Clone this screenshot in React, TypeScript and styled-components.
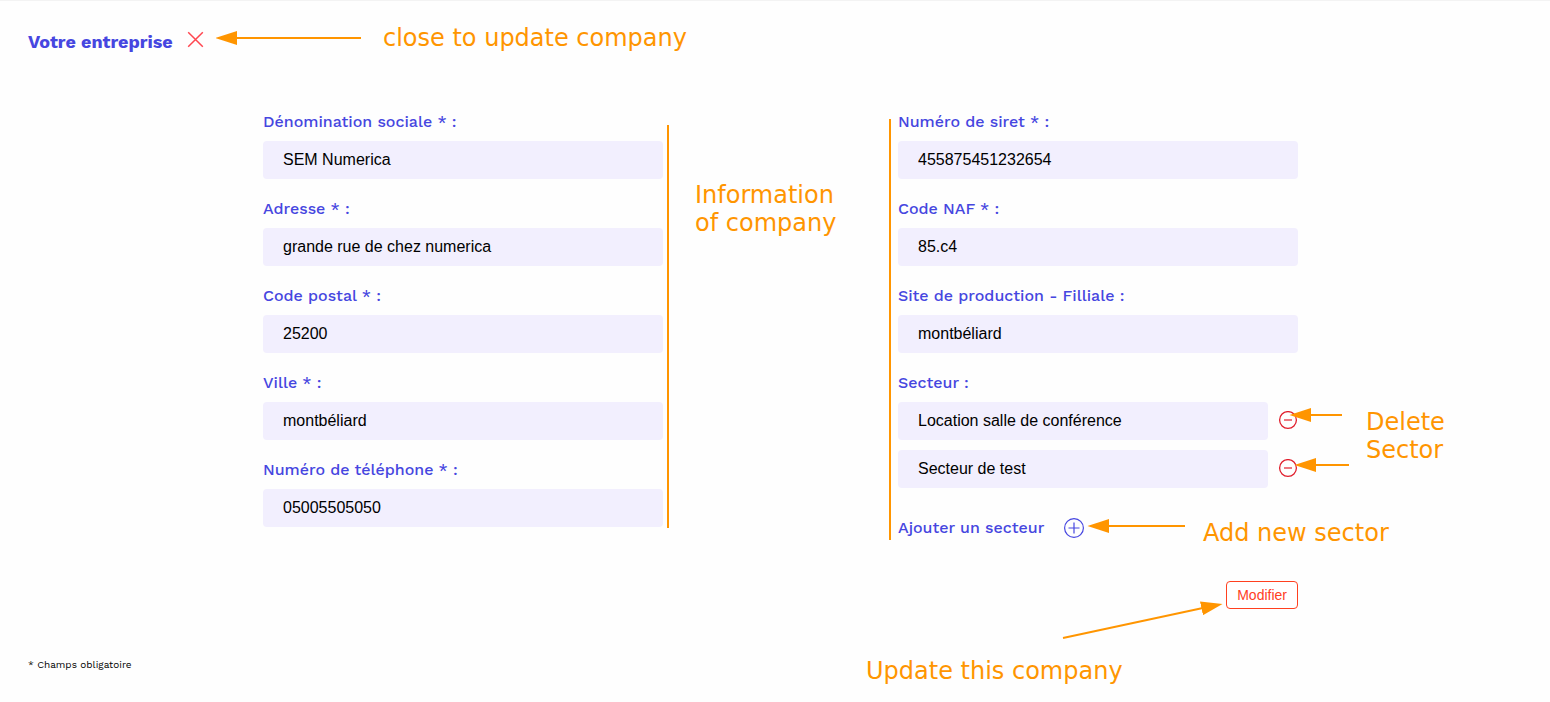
import React, { useState } from "react";
import styled, { createGlobalStyle } from "styled-components";

const color = {
  brand: "#4646e0",
  field: "#f2effe",
  note: "#ff9500",
  danger: "#e01e2c",
  action: "#ff401f",
};

const GlobalStyle = createGlobalStyle`
  *, *::before, *::after { box-sizing: border-box; }
  body {
    margin: 0;
    background: #fefefe;
    color: #000;
    font-family: "Work Sans", Inter, sans-serif;
    font-size: 16px;
  }
`;

const Page = styled.main`
  border-top: 1px solid #f3f3f3;
  padding: 21px 17px 20px 28px;
`;

const Header = styled.header`
  display: flex;
  align-items: center;
  height: 32px;
  margin-bottom: 58px;
`;

const Title = styled.h1`
  margin: 0;
  padding-top: 8px;
  min-width: 145px;
  color: ${color.brand};
  font-size: 18px;
  line-height: 22px;
  font-weight: 700;
`;

const IconButton = styled.button<{ $size: number }>`
  display: block;
  flex: none;
  width: ${(p) => p.$size}px;
  height: ${(p) => p.$size}px;
  padding: 0;
  border: 0;
  background: none;
  cursor: pointer;
`;

const CloseButton = styled(IconButton)`
  margin: 2px 12px 0 14px;
`;

const HeaderArrow = styled.svg`
  flex: none;
  display: block;
  margin-right: 22px;
`;

const Note = styled.p`
  margin: 0;
  color: ${color.note};
  font-family: "DejaVu Sans", sans-serif;
  font-size: 24px;
  line-height: 28px;
  white-space: nowrap;
`;

const Form = styled.form`
  position: relative;
  display: flex;
  flex-wrap: wrap;
  justify-content: space-between;
  max-width: 1035px;
  margin: 0 auto;
`;

const Column = styled.div`
  display: flex;
  flex-direction: column;
  flex: 0 1 400px;
  gap: 20px;
`;

const FieldGroup = styled.div`
  display: flex;
  flex-direction: column;
  gap: 10px;
`;

const Label = styled.label`
  color: ${color.brand};
  font-size: 16px;
  line-height: 19px;
  font-weight: 500;
`;

const Input = styled.input`
  flex: 1;
  width: 100%;
  min-width: 0;
  min-height: 38px;
  padding: 0 20px;
  border: 0;
  border-radius: 4px;
  background: ${color.field};
  color: #000;
  font-family: "Liberation Sans", Arial, sans-serif;
  font-size: 16px;
`;

const SectorRow = styled.div`
  display: flex;
  align-items: center;
  gap: 10px;
`;

const AddRow = styled.div`
  display: flex;
  align-items: flex-start;
  gap: 20px;
  margin-top: 10px;
  color: ${color.brand};
  line-height: 19px;
  font-weight: 500;
`;

const SubmitButton = styled.button`
  align-self: flex-end;
  margin-top: 23px;
  height: 28px;
  padding: 0 10px;
  border: 1px solid ${color.action};
  border-radius: 4px;
  background: #fff;
  color: ${color.action};
  font-family: "Liberation Sans", Arial, sans-serif;
  font-size: 14px;
  cursor: pointer;
`;

const Footnote = styled.p`
  margin: 50px 0 0;
  font-size: 10px;
  line-height: 12px;
`;

const NoteLayer = styled.svg`
  position: absolute;
  inset: 0;
  width: 100%;
  height: 100%;
  overflow: visible;
  pointer-events: none;
`;

const PlacedNote = styled(Note)<{ $x: number; $y: number }>`
  position: absolute;
  left: ${(p) => p.$x}px;
  top: ${(p) => p.$y}px;
  pointer-events: none;
`;

const ArrowHead = ({ id }: { id: string }) => (
  <marker id={id} markerUnits="userSpaceOnUse" markerWidth="22" markerHeight="14" refX="21" refY="7" orient="auto">
    <path d="M0 0L21.500 7L0 14Z" fill={color.note} />
  </marker>
);

const Arrow = ({ head, from, to }: { head: string; from: [number, number]; to: [number, number] }) => {
  const length = Math.hypot(to[0] - from[0], to[1] - from[1]);
  const shaft = (length - 10) / length;
  const mid = [from[0] + (to[0] - from[0]) * shaft, from[1] + (to[1] - from[1]) * shaft];
  return (
    <>
      <path d={`M${from[0]} ${from[1]}L${mid[0]} ${mid[1]}`} stroke={color.note} strokeWidth="2" />
      <path d={`M${from[0]} ${from[1]}L${to[0]} ${to[1]}`} markerEnd={`url(#${head})`} />
    </>
  );
};

const CloseIcon = () => (
  <svg width="17" height="17" viewBox="0 0 17 17" fill="none" stroke="#ff4650" strokeWidth="1.5" aria-hidden="true">
    <path d="M1.200 1.200L15.800 15.800M15.800 1.200L1.200 15.800" />
  </svg>
);

const MinusIcon = () => (
  <svg width="20" height="20" viewBox="0 1 20 20" fill="none" aria-hidden="true">
    <circle cx="10" cy="10" r="8.400" stroke={color.danger} strokeWidth="1.300" />
    <path d="M6 10H14" stroke={color.danger} strokeWidth="1.200" />
  </svg>
);

const PlusIcon = () => (
  <svg width="20" height="20" viewBox="0 0 20 20" fill="none" stroke={color.brand} aria-hidden="true">
    <circle cx="10" cy="10" r="9.400" strokeWidth="1.200" />
    <path d="M4.500 10H15.500M10 4.500V15.500" strokeWidth="1.200" />
  </svg>
);

type FieldProps = { id: string; label: string; value: string };

const Field = ({ id, label, value }: FieldProps) => (
  <FieldGroup>
    <Label htmlFor={id}>{label}</Label>
    <Input id={id} name={id} defaultValue={value} />
  </FieldGroup>
);

const companyFields: FieldProps[] = [
  { id: "denomination", label: "Dénomination sociale * :", value: "SEM Numerica" },
  { id: "adresse", label: "Adresse * :", value: "grande rue de chez numerica" },
  { id: "code-postal", label: "Code postal * :", value: "25200" },
  { id: "ville", label: "Ville * :", value: "montbéliard" },
  { id: "telephone", label: "Numéro de téléphone * :", value: "05005505050" },
];

const legalFields: FieldProps[] = [
  { id: "siret", label: "Numéro de siret * :", value: "455875451232654" },
  { id: "naf", label: "Code NAF * :", value: "85.c4" },
  { id: "site", label: "Site de production - Filliale :", value: "montbéliard" },
];

export default function App() {
  const [sectors, setSectors] = useState([
    { key: 1, name: "Location salle de conférence" },
    { key: 2, name: "Secteur de test" },
  ]);

  return (
    <>
      <GlobalStyle />
      <Page>
        <Header>
          <Title>Votre entreprise</Title>
          <CloseButton type="button" $size={17} aria-label="Fermer">
            <CloseIcon />
          </CloseButton>
          <HeaderArrow width="145" height="14" viewBox="0 0 145 14" aria-hidden="true">
            <defs>
              <ArrowHead id="header-head" />
            </defs>
            <Arrow head="header-head" from={[145, 7]} to={[0, 7]} />
          </HeaderArrow>
          <Note>close to update company</Note>
        </Header>

        <Form onSubmit={(e) => e.preventDefault()}>
          <Column>
            {companyFields.map((f) => (
              <Field key={f.id} {...f} />
            ))}
          </Column>
          <Column>
            {legalFields.map((f) => (
              <Field key={f.id} {...f} />
            ))}
            <FieldGroup>
              <Label htmlFor="secteur-1">Secteur :</Label>
              {sectors.map((s) => (
                <SectorRow key={s.key}>
                  <Input
                    id={`secteur-${s.key}`}
                    aria-label={s.key === 1 ? undefined : `Secteur ${s.key}`}
                    defaultValue={s.name}
                  />
                  <IconButton
                    type="button"
                    $size={20}
                    aria-label="Supprimer le secteur"
                    onClick={() => setSectors(sectors.filter((o) => o.key !== s.key))}
                  >
                    <MinusIcon />
                  </IconButton>
                </SectorRow>
              ))}
            </FieldGroup>
            <AddRow>
              <span>Ajouter un secteur</span>
              <IconButton
                type="button"
                $size={20}
                aria-label="Ajouter un secteur"
                onClick={() => setSectors([...sectors, { key: Date.now(), name: "" }])}
              >
                <PlusIcon />
              </IconButton>
            </AddRow>
            <SubmitButton type="submit">Modifier</SubmitButton>
          </Column>

          <NoteLayer aria-hidden="true">
            <defs>
              <ArrowHead id="form-head" />
            </defs>
            <path d="M405 13V416M627 7V428" stroke={color.note} strokeWidth="2" />
            <Arrow head="form-head" from={[1079, 303]} to={[1027, 303]} />
            <Arrow head="form-head" from={[1086, 353]} to={[1032, 353]} />
            <Arrow head="form-head" from={[922, 414]} to={[825, 414]} />
            <Arrow head="form-head" from={[800, 526]} to={[959, 492]} />
          </NoteLayer>
          <PlacedNote $x={432} $y={69}>
            Information
            <br />
            of company
          </PlacedNote>
          <PlacedNote $x={1103} $y={296}>
            Delete
            <br />
            Sector
          </PlacedNote>
          <PlacedNote $x={940} $y={407}>Add new sector</PlacedNote>
          <PlacedNote $x={603} $y={545}>Update this company</PlacedNote>
        </Form>

        <Footnote>* Champs obligatoire</Footnote>
      </Page>
    </>
  );
}
